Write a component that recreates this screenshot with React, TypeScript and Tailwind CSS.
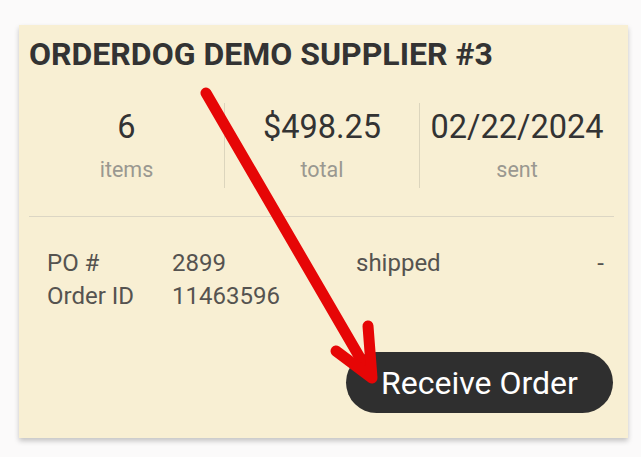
import React from "react";

const stats = [
  { value: "6", label: "items" },
  { value: "$498.25", label: "total" },
  { value: "02/22/2024", label: "sent" },
];

function Arrow() {
  return (
    <svg className="absolute left-0 top-0 pointer-events-none" width="641" height="457" viewBox="0 0 641 457">
      <g stroke="#e60606" strokeWidth="11" strokeLinecap="round" strokeLinejoin="round" fill="none">
        <path d="M206 93 L370 375" />
        <path d="M336 351 L372 378 L368 326" />
      </g>
    </svg>
  );
}

export default function App() {
  return (
    <div className="relative w-[641px] h-[457px] bg-[#fbfafa] overflow-hidden" style={{ fontFamily: "Roboto, 'Liberation Sans', sans-serif" }}>
      <div className="absolute left-[19px] top-[25px] w-[609px] h-[413px] bg-[#f8efd3] shadow-[0_3px_5px_rgba(0,0,0,0.22)] pl-[10px] pr-[14px] pt-[10px] flex flex-col">
        <h1 className="text-[32px] leading-[38px] font-bold text-[#333333]">ORDERDOG DEMO SUPPLIER #3</h1>

        <div className="flex mt-[30px] h-[85px]">
          {stats.map((s, i) => (
            <div
              key={s.label}
              className={`w-[195px] flex flex-col items-center ${i > 0 ? "border-l border-[#dcd5bd]" : ""}`}
            >
              <div className="text-[32.5px] leading-[40px] text-[#333333] mt-[4px]">{s.value}</div>
              <div className="text-[21.5px] leading-[24px] text-[#9a9890] mt-[11px]">{s.label}</div>
            </div>
          ))}
        </div>

        <div className="mt-[28px] h-px w-[585px] bg-[#dcd6c4]" />

        <div className="mt-[30px] pl-[18px] text-[24px] leading-[33px] text-[#555350]">
          <div className="flex">
            <span className="w-[125px]">PO #</span>
            <span className="w-[184px]">2899</span>
            <span className="flex-1">shipped</span>
            <span className="pr-[10px]">-</span>
          </div>
          <div className="flex">
            <span className="w-[125px]">Order ID</span>
            <span>11463596</span>
          </div>
        </div>

        <div className="flex justify-end mt-[39px] pr-[1px]">
          <button className="h-[61px] w-[267px] rounded-full bg-[#2f2f2f] text-white text-[32px] leading-none flex items-center justify-center">
            Receive Order
          </button>
        </div>
      </div>
      <Arrow />
    </div>
  );
}
